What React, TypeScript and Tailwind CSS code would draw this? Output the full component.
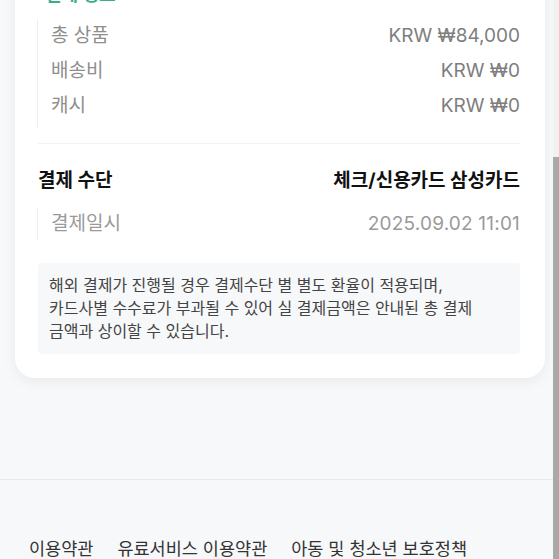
import React from 'react'

const font = { fontFamily: '"Inter", "Noto Sans CJK KR", sans-serif' }

type Row = { label: string; value: string }

const amountRows: Row[] = [
  { label: '총 상품', value: 'KRW ₩84,000' },
  { label: '배송비', value: 'KRW ₩0' },
  { label: '캐시', value: 'KRW ₩0' },
]

function DetailRow({ label, value }: Row) {
  return (
    <div className="flex h-[35px] items-center justify-between text-[19px]">
      <span className="text-[#8e8e8e]">{label}</span>
      <span className="text-[#7e7e7e]">{value}</span>
    </div>
  )
}

export default function App() {
  return (
    <div
      className="flex h-[559px] w-full overflow-hidden bg-[#f7f8fa]"
      style={font}
    >
      <div className="flex-1 overflow-hidden">
        <div className="-mt-[19px]">
          <div className="ml-[15px] mr-[8px] rounded-b-[20px] bg-white pb-[24px] pl-[22px] pr-[25px] shadow-[0_4px_14px_rgba(0,0,0,0.06)]">
            <div className="h-[27px] pl-[8px] text-[18px] font-bold leading-[27px] text-[#3aae8c]">
              결제 정보
            </div>

            <div className="mt-[11px] border-l border-[#efefef] pb-[4px] pl-[13px]">
              {amountRows.map((r) => (
                <DetailRow key={r.label} {...r} />
              ))}
            </div>

            <div className="ml-[1px] mt-[15px] border-t border-[#f2f2f2]" />

            <div className="ml-[1px] mt-[23px] flex items-center justify-between text-[19px] font-bold leading-[27px] text-[#111]">
              <span>결제 수단</span>
              <span>체크/신용카드 삼성카드</span>
            </div>

            <div className="mt-[14px] flex h-[32px] items-center justify-between border-l border-[#efefef] pl-[13px] text-[19px]">
              <span className="text-[#9a9a9a]">결제일시</span>
              <span className="tracking-[0.2px] text-[#9a9a9a]">2025.09.02 11:01</span>
            </div>

            <div className="ml-[1px] mt-[23px] rounded-[4px] bg-[#f7f8fa] px-[11px] py-[11px] text-[16px] leading-[23px] text-[#444]">
              해외 결제가 진행될 경우 결제수단 별 별도 환율이 적용되며,
              <br />
              카드사별 수수료가 부과될 수 있어 실 결제금액은 안내된 총 결제
              <br />
              금액과 상이할 수 있습니다.
            </div>
          </div>

          <div className="mt-[101px] border-t border-[#e8e9eb]" />

          <div className="mt-[57px] flex gap-[24px] pl-[29px] text-[17.5px] leading-[24px] text-[#333]">
            <span>이용약관</span>
            <span>유료서비스 이용약관</span>
            <span>아동 및 청소년 보호정책</span>
          </div>
        </div>
      </div>

      <div className="flex w-[6px] flex-col bg-[#f1f1f1]">
        <div className="mt-[157px] flex-1 bg-[#a9a9a9]" />
      </div>
    </div>
  )
}
